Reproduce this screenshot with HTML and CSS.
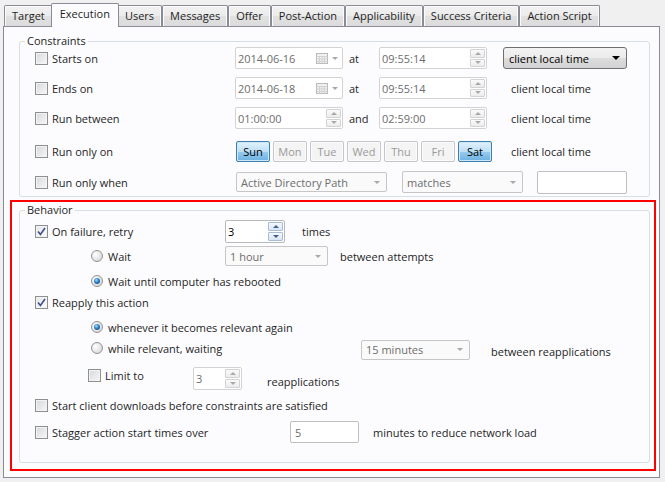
FILE: index.html
```html
<!DOCTYPE html>
<html lang="en">
<head>
    <meta charset="UTF-8">
    <title>Execution</title>
    <link rel="stylesheet" href="styles.css">
</head>
<body>
    <div class="tabs">
        <div class="tab">Target</div>
        <div class="tab active">Execution</div>
        <div class="tab">Users</div>
        <div class="tab">Messages</div>
        <div class="tab">Offer</div>
        <div class="tab">Post-Action</div>
        <div class="tab">Applicability</div>
        <div class="tab">Success Criteria</div>
        <div class="tab">Action Script</div>
    </div>

    <div class="panel">
        <fieldset class="group constraints">
            <legend>Constraints</legend>
            <div class="gbody">
                <div class="crow">
                    <div class="opt"><span class="box"></span>Starts on</div>
                    <div class="field date">
                        <span class="val">2014-06-16</span>
                        <svg class="cal" width="12" height="11" viewBox="0 0 12 11"><rect x="0.5" y="0.5" width="11" height="10" fill="#f1f1f1" stroke="#b9b9b9"/><path d="M0.5 3.5h11M0.5 6h11M0.5 8.5h11M3.5 3.5v7M6 3.5v7M8.5 3.5v7" stroke="#d2d2d2"/></svg>
                        <span class="tri"></span>
                    </div>
                    <span class="conj">at</span>
                    <div class="field time">
                        <span class="val">09:55:14</span>
                        <span class="spin"><span class="up"></span><span class="down"></span></span>
                    </div>
                    <div class="combo tz"><span>client local time</span><span class="tri dark"></span></div>
                </div>

                <div class="crow">
                    <div class="opt"><span class="box"></span>Ends on</div>
                    <div class="field date">
                        <span class="val">2014-06-18</span>
                        <svg class="cal" width="12" height="11" viewBox="0 0 12 11"><rect x="0.5" y="0.5" width="11" height="10" fill="#f1f1f1" stroke="#b9b9b9"/><path d="M0.5 3.5h11M0.5 6h11M0.5 8.5h11M3.5 3.5v7M6 3.5v7M8.5 3.5v7" stroke="#d2d2d2"/></svg>
                        <span class="tri"></span>
                    </div>
                    <span class="conj">at</span>
                    <div class="field time">
                        <span class="val">09:55:14</span>
                        <span class="spin"><span class="up"></span><span class="down"></span></span>
                    </div>
                    <span class="tzlabel">client local time</span>
                </div>

                <div class="crow">
                    <div class="opt"><span class="box"></span>Run between</div>
                    <div class="field time">
                        <span class="val">01:00:00</span>
                        <span class="spin"><span class="up"></span><span class="down"></span></span>
                    </div>
                    <span class="conj">and</span>
                    <div class="field time">
                        <span class="val">02:59:00</span>
                        <span class="spin"><span class="up"></span><span class="down"></span></span>
                    </div>
                    <span class="tzlabel">client local time</span>
                </div>

                <div class="crow days">
                    <div class="opt"><span class="box"></span>Run only on</div>
                    <div class="daygroup">
                        <span class="day on">Sun</span>
                        <span class="day">Mon</span>
                        <span class="day">Tue</span>
                        <span class="day">Wed</span>
                        <span class="day">Thu</span>
                        <span class="day">Fri</span>
                        <span class="day on">Sat</span>
                    </div>
                    <span class="tzlabel after-days">client local time</span>
                </div>

                <div class="crow when">
                    <div class="opt"><span class="box"></span>Run only when</div>
                    <div class="combo ad"><span>Active Directory Path</span><span class="tri"></span></div>
                    <div class="combo match"><span>matches</span><span class="tri"></span></div>
                    <div class="text cond"></div>
                </div>
            </div>
        </fieldset>

        <div class="highlight">
            <fieldset class="group behavior">
                <legend>Behavior</legend>
                <div class="gbody">
                    <div class="brow">
                        <div class="opt retry"><span class="box checked"><svg width="9" height="9" viewBox="0 0 9 9"><path d="M1 4.6l2.4 2.9L8 1" fill="none" stroke="#3d4f86" stroke-width="1.6"/></svg></span>On failure, retry</div>
                        <div class="field spinbox live">
                            <span class="val">3</span>
                            <span class="spin"><span class="up"></span><span class="down"></span></span>
                        </div>
                        <span class="note times">times</span>
                    </div>

                    <div class="brow">
                        <div class="opt sub wait"><span class="radio"></span>Wait</div>
                        <div class="combo hour"><span>1 hour</span><span class="tri"></span></div>
                        <span class="note attempts">between attempts</span>
                    </div>

                    <div class="brow">
                        <div class="opt sub"><span class="radio on"></span>Wait until computer has rebooted</div>
                    </div>

                    <div class="brow tight">
                        <div class="opt"><span class="box checked"><svg width="9" height="9" viewBox="0 0 9 9"><path d="M1 4.6l2.4 2.9L8 1" fill="none" stroke="#3d4f86" stroke-width="1.6"/></svg></span>Reapply this action</div>
                    </div>

                    <div class="brow">
                        <div class="opt sub"><span class="radio on"></span>whenever it becomes relevant again</div>
                    </div>

                    <div class="brow tight">
                        <div class="opt sub waiting"><span class="radio"></span>while relevant, waiting</div>
                        <div class="combo mins"><span>15 minutes</span><span class="tri"></span></div>
                        <span class="note reapps">between reapplications</span>
                    </div>

                    <div class="brow loose">
                        <div class="opt limit"><span class="box"></span>Limit to</div>
                        <div class="field spinbox small">
                            <span class="val">3</span>
                            <span class="spin"><span class="up"></span><span class="down"></span></span>
                        </div>
                        <span class="note limit-note">reapplications</span>
                    </div>

                    <div class="brow mid">
                        <div class="opt"><span class="box"></span>Start client downloads before constraints are satisfied</div>
                    </div>

                    <div class="brow mid">
                        <div class="opt stagger"><span class="box"></span>Stagger action start times over</div>
                        <div class="text minutes"><span class="val">5</span></div>
                        <span class="note load">minutes to reduce network load</span>
                    </div>
                </div>
            </fieldset>
        </div>
    </div>
</body>
</html>
```

FILE: styles.css
```css
* {
    box-sizing: border-box;
}

body {
    margin: 0;
    width: 665px;
    height: 482px;
    overflow: hidden;
    background: #f0f0f0;
    font-family: "Open Sans", "Noto Sans", sans-serif;
    font-size: 11px;
    color: #1e1e1e;
}

/* tab strip */
.tabs {
    display: flex;
    align-items: flex-end;
    height: 26px;
    padding-left: 4px;
}
.tab {
    height: 21px;
    padding: 0 7px;
    border: 1px solid #898c95;
    border-bottom: none;
    border-radius: 2px 2px 0 0;
    background: linear-gradient(#f2f2f2, #ebebeb 50%, #e1e1e1 51%, #dcdcdc);
    box-shadow: inset 1px 1px 0 #fbfbfb, inset -1px 0 0 #fbfbfb;
    line-height: 19px;
    white-space: nowrap;
}
.tab.active {
    position: relative;
    z-index: 1;
    height: 24px;
    margin: 0 -2px -1px;
    padding: 0 8px;
    background: #fcfcfe;
    box-shadow: none;
    line-height: 19px;
}

.panel {
    margin-left: 3px;
    width: 657px;
    border: 1px solid #898c95;
    background: #fcfcfe;
    padding-top: 8px;
}

/* group boxes */
.group {
    margin: 0;
    padding: 0;
    min-width: 0;
    border: 1px solid #d5dfe5;
    border-radius: 3px;
}
.group legend {
    margin-left: 5px;
    padding: 0 2px;
    height: 12px;
    line-height: 12px;
}
.gbody {
    padding: 0 0 3px 15px;
}
.constraints {
    margin: 0 9px 0 15px;
}
.highlight {
    margin: 3px 3px 6px 6px;
    border: 2px solid #f00;
    padding: 2px 4px 6px 7px;
}
.behavior .gbody {
    padding-bottom: 20px;
}

/* option labels */
.opt {
    display: flex;
    align-items: center;
    gap: 4px;
    white-space: nowrap;
}
.box {
    display: inline-flex;
    align-items: center;
    justify-content: center;
    width: 13px;
    height: 13px;
    border: 1px solid #8e8f8f;
    background: linear-gradient(135deg, #d6d8dc, #f7f7f7);
    box-shadow: inset 0 0 0 1px #f3f3f3;
    flex: none;
}
.box.checked {
    background: linear-gradient(135deg, #e4e6ea, #fbfbfb);
}
.radio {
    display: inline-flex;
    align-items: center;
    justify-content: center;
    width: 12px;
    height: 12px;
    margin-right: 1px;
    border: 1px solid #929292;
    border-radius: 50%;
    background: radial-gradient(circle at 35% 35%, #ffffff, #e3e3e3 60%, #cfcfcf);
    flex: none;
}
.radio.on::after {
    content: "";
    width: 6px;
    height: 6px;
    border-radius: 50%;
    background: radial-gradient(circle at 40% 35%, #a6dcff, #2b7fc4 45%, #0d3a68);
}

/* inputs */
.field,
.text,
.combo {
    display: flex;
    align-items: center;
    border: 1px solid #d2d3d5;
    border-radius: 2px;
    background: #fff;
    color: #6d6d6d;
    flex: none;
}
.val {
    flex: 1;
    padding-left: 2px;
}
.field.date,
.field.time {
    width: 108px;
    height: 22px;
}
.field.date {
    padding-right: 4px;
}
.cal {
    margin-right: 4px;
}
.tri {
    width: 0;
    height: 0;
    border-left: 3px solid transparent;
    border-right: 3px solid transparent;
    border-top: 3px solid #a8a8a8;
}
.tri.dark {
    border-left-width: 4px;
    border-right-width: 4px;
    border-top: 4px solid #000;
}
.spin {
    display: flex;
    flex-direction: column;
    align-self: stretch;
    gap: 1px;
    width: 16px;
    padding: 1px 1px 1px 0;
}
.spin span {
    flex: 1;
    display: flex;
    align-items: center;
    justify-content: center;
    border: 1px solid #d3d3d3;
    border-radius: 1px;
    background: linear-gradient(#fafafa, #ececec);
}
.spin .up::before,
.spin .down::before {
    content: "";
    border-left: 3px solid transparent;
    border-right: 3px solid transparent;
}
.spin .up::before {
    border-bottom: 3px solid #a9a9a9;
}
.spin .down::before {
    border-top: 3px solid #a9a9a9;
}
.spinbox.live {
    color: #000;
    border-color: #b5b8bd;
}
.spinbox.live .spin span {
    border-color: #a9bcd6;
    background: linear-gradient(#f4f8fc, #d9e5f3);
}
.spinbox.live .up::before {
    border-bottom-color: #3f5f92;
}
.spinbox.live .down::before {
    border-top-color: #3f5f92;
}

.combo {
    justify-content: space-between;
    padding: 0 6px 0 4px;
    border-color: #c6c6c6;
    background: #fafafa;
    white-space: nowrap;
}
.combo.tz {
    width: 124px;
    height: 22px;
    margin-left: 16px;
    padding-left: 5px;
    border: 1px solid #707070;
    border-radius: 3px;
    background: linear-gradient(#f3f3f3, #ebebeb 50%, #dddddd 51%, #d2d2d2);
    color: #000;
}
.text {
    border-color: #bdbfc3;
}

/* constraint rows */
.crow {
    display: flex;
    align-items: center;
    height: 22px;
    margin-top: 8px;
}
.crow:first-child {
    margin-top: 0;
}
.crow.days {
    margin-top: 11px;
}
.crow.when {
    margin-top: 9px;
}
.crow .opt {
    width: 200px;
}
.conj {
    width: 36px;
    padding-left: 6px;
}
.tzlabel {
    margin-left: 24px;
}
.tzlabel.after-days {
    margin-left: 19px;
}
.daygroup {
    display: flex;
    gap: 3px;
    margin-left: 1px;
}
.day {
    width: 34px;
    height: 21px;
    border: 1px solid #c4c6c8;
    border-radius: 2px;
    background: #f4f4f4;
    box-shadow: inset 0 0 0 1px #fcfcfc;
    color: #9a9a9a;
    text-align: center;
    line-height: 19px;
}
.day.on {
    border-color: #3c7fb1;
    background: linear-gradient(#e3f2fc, #bcdff6 50%, #98cbef 51%, #6cb1e2);
    box-shadow: inset 0 0 0 1px #cfe8f8;
    color: #000;
}
.combo.ad {
    width: 151px;
    height: 20px;
    margin-left: 1px;
}
.combo.match {
    width: 121px;
    height: 22px;
    margin-left: 15px;
}
.text.cond {
    width: 90px;
    height: 23px;
    margin-left: 14px;
}

/* behavior rows */
.brow {
    display: flex;
    align-items: center;
    height: 20px;
    margin-top: 5px;
}
.brow.tight {
    margin-top: 1px;
}
.brow.loose {
    margin-top: 10px;
}
.brow.mid {
    margin-top: 7px;
}
.opt.sub {
    margin-left: 56px;
    gap: 4px;
}
.opt.retry {
    width: 190px;
}
.opt.wait {
    width: 134px;
}
.opt.waiting {
    width: 270px;
}
.opt.limit {
    width: 105px;
    margin-left: 53px;
    margin-bottom: 6px;
}
.opt.stagger {
    width: 255px;
}
.spinbox {
    height: 23px;
}
.spinbox.live {
    width: 60px;
}
.spinbox.small {
    width: 49px;
}
.combo.hour {
    width: 103px;
    height: 20px;
}
.combo.mins {
    width: 109px;
    height: 20px;
    margin-top: 3px;
}
.text.minutes {
    width: 69px;
    height: 22px;
    padding-left: 2px;
}
.note.times {
    margin-left: 17px;
}
.note.attempts {
    margin-left: 12px;
}
.note.reapps {
    margin-left: 21px;
    margin-top: 6px;
}
.note.limit-note {
    margin-left: 25px;
    margin-top: 6px;
}
.note.load {
    margin-left: 14px;
}
```
